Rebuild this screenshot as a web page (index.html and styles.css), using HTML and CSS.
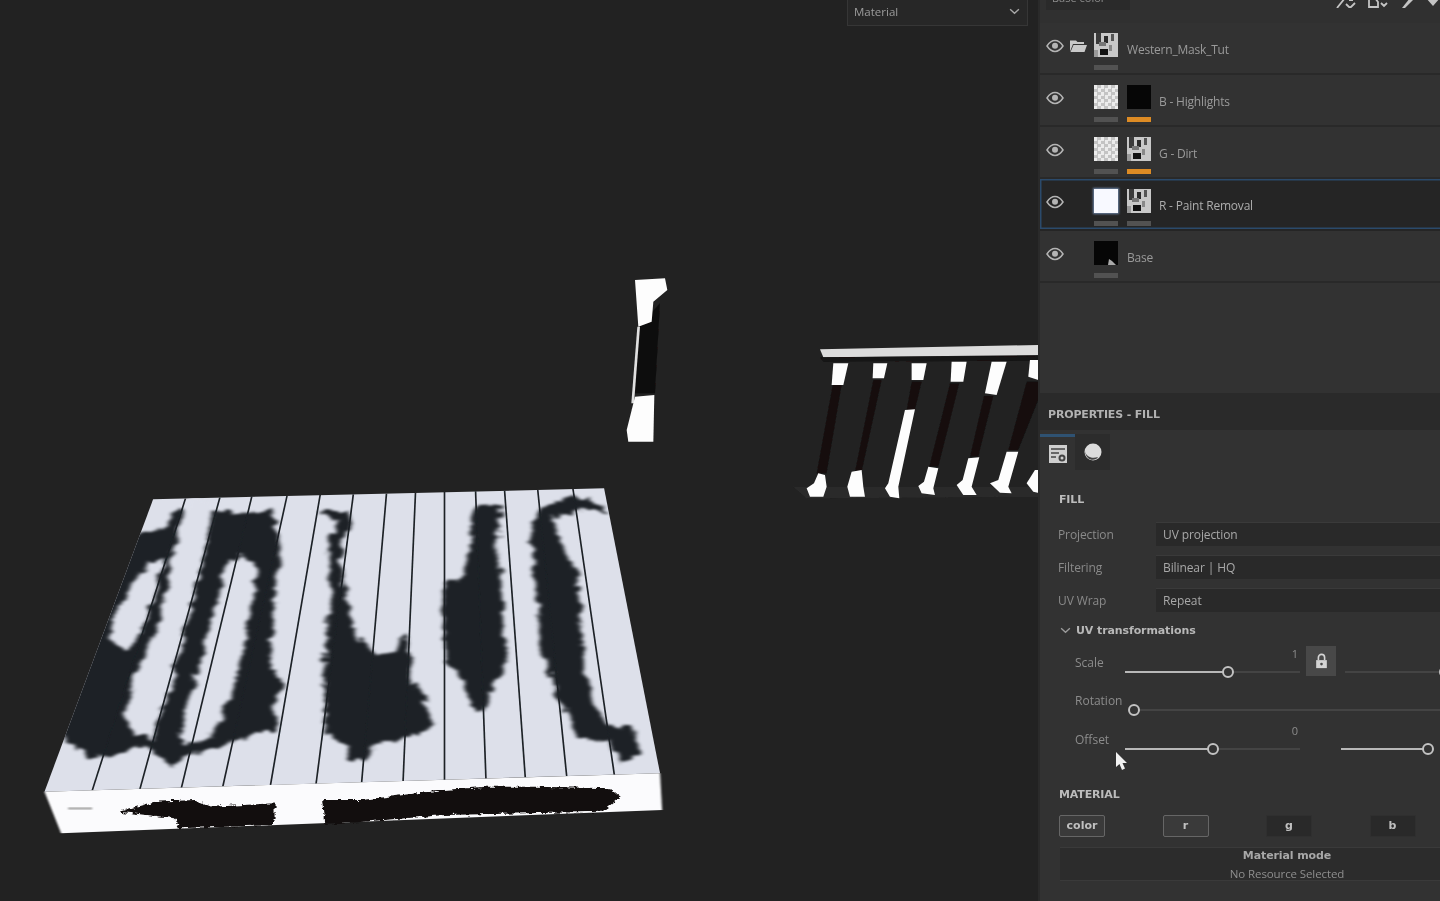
FILE: index.html
```html
<!DOCTYPE html>
<html lang="en">
<head>
<meta charset="utf-8">
<title>Layer stack and fill properties</title>
<link rel="stylesheet" href="styles.css">
</head>
<body>
<svg class="defs" width="0" height="0" aria-hidden="true">
  <defs>
    <filter id="rough" x="-5%" y="-5%" width="110%" height="110%" color-interpolation-filters="sRGB">
      <feTurbulence type="fractalNoise" baseFrequency="0.045 0.03" numOctaves="4" seed="4" result="n"/>
      <feDisplacementMap in="SourceGraphic" in2="n" scale="34" xChannelSelector="R" yChannelSelector="G"/>
      <feGaussianBlur stdDeviation="5 3.500"/>
    </filter>
    <filter id="rough2" x="-5%" y="-20%" width="110%" height="140%" color-interpolation-filters="sRGB">
      <feTurbulence type="fractalNoise" baseFrequency="0.06 0.12" numOctaves="3" seed="9" result="n"/>
      <feDisplacementMap in="SourceGraphic" in2="n" scale="16" xChannelSelector="R" yChannelSelector="G"/>
      <feGaussianBlur stdDeviation="1.500 1"/>
    </filter>
    <filter id="soft" x="-2%" y="-2%" width="104%" height="104%"><feGaussianBlur stdDeviation="1.500"/></filter>
    <filter id="soft3" x="-5%" y="-5%" width="110%" height="110%"><feGaussianBlur stdDeviation="2 1.500"/></filter>
    <clipPath id="top-face"><polygon points="297,58 1385,25 1520,880 35,935"/></clipPath>
    <symbol id="eye" viewBox="0 0 18 14">
      <path d="M1 7C3.500 3.200 6 1.600 9 1.600S14.500 3.200 17 7C14.500 10.800 12 12.400 9 12.400S3.500 10.800 1 7Z" fill="none" stroke="#b4b4b4" stroke-width="1.500"/>
      <circle cx="9" cy="6.800" r="3" fill="#b4b4b4"/>
    </symbol>
    <symbol id="mask" viewBox="0 0 24 24">
      <rect width="24" height="24" fill="#c8c8c8"/>
      <rect x="2" y="0" width="5" height="11" fill="#3a3a3a"/>
      <rect x="10" y="3" width="4" height="7" fill="#2a2a2a"/>
      <rect x="17" y="1" width="3" height="7" fill="#555"/>
      <rect x="5" y="9" width="7" height="4" fill="#777"/>
      <rect x="6" y="16" width="8" height="6" fill="#111"/>
      <rect x="0" y="17" width="4" height="7" fill="#999"/>
      <rect x="15" y="12" width="3" height="6" fill="#888"/>
    </symbol>
  </defs>
</svg>
<div class="app">
  <main class="viewport">
    <svg class="scene" viewBox="0 0 1038 901" width="1038" height="901" role="img" aria-label="3D pallet with paint removal mask">
      <g transform="translate(30 480) scale(0.4145 0.3333)">
        <polygon points="297,58 1385,25 1520,880 35,935" fill="#dde0ea"/>
        <g clip-path="url(#top-face)">
          <g filter="url(#rough)">
            <polygon fill="#1d2126" points="200,170 330,145 345,90 440,85 480,100 580,95 595,130 605,200 597,300 590,400 582,500 582,560 612,610 585,680 600,745 530,765 470,795 420,815 370,825 350,865 310,825 280,795 215,825 150,835 80,775 -10,790"/>
            <polygon fill="#1d2126" points="695,85 765,100 775,130 750,200 755,300 770,410 795,470 830,522 880,512 908,460 912,500 927,600 978,730 935,765 825,795 800,845 765,835 765,795 712,765 712,650 708,560 718,400 728,300 718,170 740,130"/>
            <polygon fill="#1d2126" points="1070,80 1135,80 1127,200 1137,300 1142,450 1152,540 1115,625 1092,695 1065,675 1045,605 1005,535 993,420 998,315 1045,285 1063,200"/>
            <polygon fill="#1d2126" points="1213,120 1235,80 1310,50 1360,65 1400,100 1350,88 1262,110 1280,190 1320,280 1330,400 1340,560 1360,675 1405,745 1455,735 1477,825 1430,845 1395,785 1325,775 1293,705 1272,650 1232,500 1217,300 1207,150"/>
            <polygon fill="#dde0ea" points="290,245 322,240 297,350 262,470 232,515 195,480 190,450 240,320"/>
            <polygon fill="#dde0ea" points="385,50 445,70 415,250 372,450 332,650 290,775 243,755 225,710 250,600 285,500 320,400 335,300 350,190"/>
            <polygon fill="#dde0ea" points="510,228 548,262 525,450 485,650 437,770 372,795 356,780 393,620 443,400 473,260"/>
          </g>
        </g>
        <g stroke="#1c2026" stroke-width="4" fill="none" filter="url(#soft)">
          <path d="M375 56 150 932"/><path d="M458 53 265 928"/><path d="M535 50 365 925"/><path d="M620 48 465 921"/>
          <path d="M700 45 580 917"/><path d="M780 43 690 913"/><path d="M860 41 800 909"/><path d="M930 38 900 906"/>
          <path d="M1000 36 1000 902"/><path d="M1075 34 1100 898"/><path d="M1145 32 1195 895"/><path d="M1225 30 1295 891"/><path d="M1310 27 1410 887"/>
        </g>
        <polygon points="35,935 1520,880 1525,990 75,1060" fill="#fbfbfd" filter="url(#soft3)"/>
        <g fill="#120e0e" filter="url(#rough2)">
          <polygon points="215,995 300,965 400,960 440,980 590,970 590,1035 360,1045 350,1015"/>
          <polygon points="705,960 800,960 1000,930 1100,920 1220,920 1400,925 1425,950 1380,995 1000,1005 710,1035"/>
        </g>
        <rect x="92" y="982" width="58" height="7" fill="#b4b4b4" filter="url(#soft3)"/>
      </g>
      <g transform="translate(610 270) scale(0.3333)" filter="url(#soft3)">
        <polygon fill="#100d0d" points="85,170 150,100 135,370 75,370"/>
        <polygon fill="#fdfdfd" points="75,30 165,25 172,60 130,95 125,155 85,170"/>
        <polygon fill="#e0e0e0" points="82,170 90,170 72,400 64,400"/>
        <polygon fill="#fdfdfd" points="75,380 133,375 130,515 55,515 50,480 65,420"/>
        <polygon fill="#2b2b2b" points="550,650 1285,650 1285,680 590,685"/>
        <polygon fill="#dcdcdc" points="630,238 1285,225 1285,255 640,262"/>
        <polygon fill="#141212" points="630,262 1285,258 1285,272 640,275"/>
        <g fill="#140f0f">
          <polygon points="668,345 695,345 650,610 620,610"/>
          <polygon points="790,330 815,330 755,605 735,605"/>
          <polygon points="905,335 935,335 915,420 890,420"/>
          <polygon points="1020,340 1048,340 985,590 958,590"/>
          <polygon points="1122,378 1150,378 1105,560 1080,560"/>
          <polygon points="1250,335 1285,335 1285,390 1225,540 1195,540"/>
        </g>
        <g fill="#fdfdfd">
          <polygon points="670,280 715,280 700,345 665,345"/>
          <polygon points="625,610 645,615 650,650 640,680 600,680 590,655 612,640"/>
          <polygon points="790,280 832,280 822,325 788,325"/>
          <polygon points="725,605 755,600 760,650 765,680 720,680 712,650"/>
          <polygon points="905,280 950,280 940,330 905,330"/>
          <polygon points="885,420 915,418 865,650 868,685 840,680 825,655 835,640"/>
          <polygon points="1025,275 1070,275 1060,335 1022,335"/>
          <polygon points="955,590 985,595 970,655 975,675 935,670 925,648 942,635"/>
          <polygon points="1145,275 1190,275 1160,375 1125,370"/>
          <polygon points="1075,565 1108,562 1085,650 1100,675 1060,675 1040,645 1058,630"/>
          <polygon points="1260,270 1285,270 1285,330 1255,320"/>
          <polygon points="1190,545 1225,545 1195,650 1205,670 1170,668 1140,640 1165,630"/>
          <polygon points="1275,600 1290,600 1290,670 1270,665 1250,640"/>
        </g>
      </g>
    </svg>
    <div class="mode-select">
      <span>Material</span>
      <svg class="chev" viewBox="0 0 12 8" width="11" height="7"><path d="M1 1.500 6 6l5-4.500" fill="none" stroke="#a8a8a8" stroke-width="1.600"/></svg>
    </div>
  </main>

  <aside class="panel">
    <div class="toolbar">
      <div class="channel">Base color <svg class="chev-s" viewBox="0 0 12 8" width="8" height="5"><path d="M1 1.500 6 6l5-4.500" fill="none" stroke="#a8a8a8" stroke-width="1.600"/></svg></div>
      <div class="tools">
        <svg viewBox="0 0 20 10" width="20" height="10"><path d="M1 10 9 0M10 6l4 4 5-5M13 2h4" fill="none" stroke="#c4c4c4" stroke-width="1.800"/></svg>
        <svg viewBox="0 0 20 10" width="20" height="10"><path d="M1 0v9h9l0-5-3-4ZM13 5l3 3 3-3" fill="none" stroke="#c4c4c4" stroke-width="1.800"/></svg>
        <svg viewBox="0 0 14 10" width="14" height="10"><path d="M2 10 10 0h3v2L5 10Z" fill="#c4c4c4"/></svg>
        <svg viewBox="0 0 14 10" width="14" height="10"><path d="M0 0h14L7 8Z" fill="#c4c4c4"/></svg>
      </div>
    </div>

    <ul class="layers">
      <li class="layer">
        <svg class="eye"><use href="#eye"/></svg>
        <svg class="folder" viewBox="0 0 18 14" width="18" height="14"><path d="M1 3V1.500h6L8.500 3H15v2H4L1 12.500ZM4.500 6H18l-2.500 7H1.500Z" fill="#c9c9c9"/></svg>
        <div class="thumb-col"><svg class="thumb"><use href="#mask"/></svg><i class="strip"></i></div>
        <span class="name group-name">Western_Mask_Tut</span>
      </li>
      <li class="layer">
        <svg class="eye"><use href="#eye"/></svg>
        <div class="thumb-col indent"><div class="thumb checker"></div><i class="strip"></i></div>
        <div class="thumb-col"><div class="thumb black"></div><i class="strip orange"></i></div>
        <span class="name">B - Highlights</span>
      </li>
      <li class="layer">
        <svg class="eye"><use href="#eye"/></svg>
        <div class="thumb-col indent"><div class="thumb checker"></div><i class="strip"></i></div>
        <div class="thumb-col"><svg class="thumb"><use href="#mask"/></svg><i class="strip orange"></i></div>
        <span class="name">G - Dirt</span>
      </li>
      <li class="layer selected">
        <svg class="eye"><use href="#eye"/></svg>
        <div class="thumb-col indent"><div class="thumb white"></div><i class="strip"></i></div>
        <div class="thumb-col"><svg class="thumb"><use href="#mask"/></svg><i class="strip"></i></div>
        <span class="name">R - Paint Removal</span>
      </li>
      <li class="layer">
        <svg class="eye"><use href="#eye"/></svg>
        <div class="thumb-col indent"><div class="thumb black base-thumb"><svg viewBox="0 0 24 24" width="24" height="24"><path d="M14 24l1-6 3 2 4 4Z" fill="#aaa"/></svg></div><i class="strip"></i></div>
        <span class="name group-name base-name">Base</span>
      </li>
    </ul>

    <section class="props">
      <h2 class="props-title">PROPERTIES - FILL</h2>
      <div class="tabs">
        <div class="tab active">
          <svg viewBox="0 0 20 20" width="20" height="20"><path d="M1 1h18v18H1Z" fill="#cfcfcf"/><path d="M3 5h14M3 9h8M3 13h5" stroke="#444" stroke-width="1.300"/><circle cx="14" cy="14" r="3.500" fill="#444"/><circle cx="14" cy="14" r="1.500" fill="#cfcfcf"/></svg>
        </div>
        <div class="tab dark">
          <svg viewBox="0 0 18 18" width="18" height="18"><circle cx="9" cy="9" r="8.500" fill="#dcdcdc"/><path d="M1 8c1 6 7 8 13 6-2 4-12 5-13-6Z" fill="#444"/></svg>
        </div>
      </div>

      <h3 class="sec fill-head">FILL</h3>
      <div class="field"><label>Projection</label><div class="input">UV projection</div></div>
      <div class="field"><label>Filtering</label><div class="input">Bilinear | HQ</div></div>
      <div class="field"><label>UV Wrap</label><div class="input">Repeat</div></div>

      <div class="uv-head">
        <svg viewBox="0 0 12 8" width="11" height="7"><path d="M1 1.500 6 6l5-4.500" fill="none" stroke="#9c9c9c" stroke-width="1.500"/></svg>
        <span>UV transformations</span>
      </div>

      <div class="xf">
        <span class="xf-label">Scale</span>
        <div class="slider"><b class="fill" style="width:103px"></b><i class="knob"></i><b class="rest"></b><span class="val">1</span></div>
        <div class="lock"><svg viewBox="0 0 14 18" width="13" height="16"><path d="M3.500 8V5a3.500 3.500 0 0 1 7 0v3" fill="none" stroke="#d4d4d4" stroke-width="1.800"/><path d="M1 8h12v9H1Z" fill="#d4d4d4"/><circle cx="7" cy="12.500" r="1.500" fill="#484848"/></svg></div>
        <div class="slider second"><b class="rest"></b><i class="knob"></i></div>
      </div>
      <div class="xf">
        <span class="xf-label">Rotation</span>
        <div class="slider wide"><i class="knob first"></i><b class="rest"></b></div>
      </div>
      <div class="xf">
        <span class="xf-label">Offset</span>
        <div class="slider"><b class="fill" style="width:88px"></b><i class="knob"></i><b class="rest"></b><span class="val">0</span></div>
        <div class="slider third"><b class="fill" style="width:87px"></b><i class="knob"></i></div>
        <svg class="cursor" viewBox="0 0 12 19" width="12" height="19"><path d="M1 0v15l3.500-3 2.500 6 3-1.500-2.500-5.500H12Z" fill="#f2f2f2"/></svg>
      </div>

      <h3 class="sec mat-head">MATERIAL</h3>
      <div class="chans">
        <button class="chan on">color</button>
        <button class="chan on">r</button>
        <button class="chan">g</button>
        <button class="chan">b</button>
      </div>
      <div class="matmode">
        <strong>Material mode</strong>
        <span>No Resource Selected</span>
      </div>
    </section>
  </aside>
</div>
</body>
</html>
```
FILE: styles.css
```css
* { box-sizing: border-box; }
html, body { margin: 0; padding: 0; height: 100%; overflow: hidden; background: #222; }
body { font-family: "Open Sans", "Liberation Sans", sans-serif; font-size: 12px; color: #a6a6a6; }
.defs { position: absolute; }

.app { display: flex; width: 1440px; height: 901px; overflow: hidden; }

.viewport { position: relative; flex: none; width: 1038px; height: 901px; background: #222222; overflow: hidden; }
.scene { position: absolute; inset: 0; display: block; }
.mode-select {
  position: absolute; left: 847px; top: -6px; width: 181px; height: 32px;
  display: flex; align-items: flex-end; justify-content: space-between;
  padding: 0 7px 6px 6px; background: #272727; border: 1px solid #363636; color: #9c9c9c; font-size: 11.500px;
  filter: blur(.5px);
}
.chev { margin-bottom: 4px; }

.panel { flex: none; width: 402px; height: 901px; background: #323232; overflow: hidden; border-left: 2px solid #2a2a2a; filter: blur(.55px); }

.toolbar { height: 23px; padding: 0 0 13px 6px; display: flex; justify-content: space-between; align-items: flex-end; background: #303030; }
.channel { width: 84px; height: 20px; flex: none; padding: 0 6px; background: #2a2a2a; font-size: 11px; line-height: 16px; display: flex; align-items: flex-start; justify-content: space-between; color: #8c8c8c; }
.chev-s { margin-top: 4px; }
.tools { display: flex; gap: 12px; align-items: flex-end; height: 10px; margin-bottom: 2px; }

.layers { list-style: none; margin: 0; padding: 0; }
.layer { height: 52px; display: flex; align-items: flex-start; border-bottom: 2px solid #292929; padding-left: 6px; background: #323232; }
.layer.selected { margin-right: -4px; background: #252525; border-bottom-color: #252525; box-shadow: inset 0 0 0 1.500px #2b4a6b; }
.eye { width: 18px; height: 14px; margin-top: 16px; flex: none; }
.folder { margin: 16px 0 0 5px; flex: none; }
.thumb-col { margin-left: 7px; width: 24px; flex: none; display: flex; flex-direction: column; padding-top: 10px; }
.thumb-col.indent { margin-left: 30px; }
.thumb-col + .thumb-col { margin-left: 9px; }
.thumb { display: block; width: 24px; height: 24px; }
.checker { background: repeating-conic-gradient(#c4c4c4 0 25%, #ececec 0 50%) 0 0 / 7px 7px; }
.black { background: #060606; }
.white { background: #f8f9ff; box-shadow: 0 0 2px 1px #6f86a8; }
.base-thumb svg { display: block; }
.strip { display: block; width: 24px; height: 5px; margin-top: 8px; background: #525252; }
.strip.orange { background: #dd8b24; height: 5px; }
.name { margin: 18px 0 0 8px; font-size: 12px; line-height: 17px; color: #9a9a9a; white-space: nowrap; letter-spacing: -.2px; }
.group-name { margin-left: 9px; }
.base-name { margin-left: 9px; }
.selected .name { color: #adadad; }

.props { margin-top: 110px; }
.props-title { margin: 0; height: 37px; padding-left: 8px; font-family: "DejaVu Sans", sans-serif; font-size: 11px; font-weight: 700; line-height: 44px; color: #b2b2b2; background: #2a2a2a; letter-spacing: -.15px; }
.tabs { display: flex; height: 40px; }
.tab { width: 35px; height: 36px; margin-top: 4px; display: flex; align-items: center; justify-content: center; }
.tab.active { border-top: 3px solid #2f5272; padding-bottom: 2px; }
.tab.active svg { margin-left: 1px; margin-top: 2px; }
.tab.dark { background: #2c2c2c; }

.sec { margin: 0; font-family: "DejaVu Sans", sans-serif; font-size: 11px; font-weight: 700; color: #bcbcbc; letter-spacing: -.15px; }
.fill-head { padding: 21px 0 0 19px; height: 52px; line-height: 18px; }

.field { display: flex; align-items: center; height: 24px; margin-bottom: 9px; padding-left: 18px; }
.field label { width: 98px; flex: none; color: #8a8a8a; letter-spacing: -.1px; }
.input { flex: none; width: 400px; height: 24px; padding-left: 7px; line-height: 24px; background: #292929; border-top: 1px solid #3a3a3a; color: #a8a8a8; letter-spacing: -.1px; }

.uv-head { display: flex; align-items: center; gap: 5px; padding-left: 20px; height: 18px; margin-top: 1px; margin-bottom: 14px; font-family: "DejaVu Sans", sans-serif; font-size: 11px; font-weight: 700; color: #b8b8b8; letter-spacing: -.1px; }

.xf { position: relative; display: flex; height: 38.300px; padding-left: 35px; }
.xf-label { width: 50px; flex: none; line-height: 20px; color: #8c8c8c; white-space: nowrap; }
.slider { position: relative; width: 175px; height: 14px; margin-top: 12px; flex: none; display: flex; align-items: center; }
.slider.wide { width: 320px; }
.slider.second { width: 100px; margin-left: 45px; }
.slider.third { width: 100px; margin-left: 41px; }
.fill { flex: none; height: 2px; background: #b8b8b8; }
.rest { flex: 1; height: 2px; background: #444; }
.knob { flex: none; width: 12px; height: 12px; margin: 0 -6px; border: 2px solid #c2c2c2; border-radius: 50%; background: #333; position: relative; z-index: 1; }
.knob.first { margin-left: 3px; margin-right: -1px; }
.val { position: absolute; right: 2px; top: -21px; line-height: 20px; font-size: 11px; color: #8c8c8c; }
.lock { position: absolute; left: 266px; top: -7px; width: 30px; height: 30px; background: #484848; display: flex; align-items: center; justify-content: center; }
.cursor { position: absolute; left: 75px; top: 22px; }

.mat-head { padding: 19px 0 0 19px; height: 47px; line-height: 16px; }
.chans { display: flex; gap: 57.500px; padding-left: 19px; height: 22px; }
.chan { flex: none; width: 46px; height: 22px; padding: 0; font-family: "DejaVu Sans", sans-serif; font-size: 11px; font-weight: 700; line-height: 18px; color: #c0c0c0; background: #292929; border: 1px solid #2f2f2f; }
.chan.on { background: #3a3a3a; border: 1.500px solid #666; border-radius: 2px; }

.matmode { margin: 10px 0 0 20px; width: 454px; height: 34px; display: flex; flex-direction: column; align-items: center; background: #2c2c2c; border-top: 1px solid #3a3a3a; border-bottom: 1px solid #3a3a3a; }
.matmode strong { font-family: "DejaVu Sans", sans-serif; font-size: 11px; line-height: 15px; color: #a8a8a8; letter-spacing: -.1px; }
.matmode span { font-size: 11.500px; line-height: 17px; color: #8e8e8e; letter-spacing: -.1px; margin-top: 2px; }
```
